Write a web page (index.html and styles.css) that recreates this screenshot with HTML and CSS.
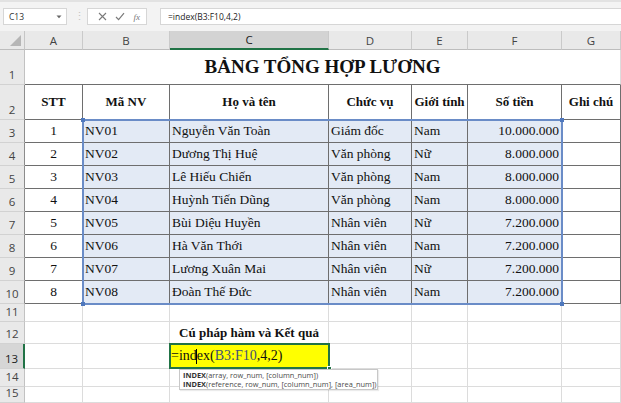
FILE: index.html
```html
<!DOCTYPE html>
<html lang="vi">
<head>
<meta charset="utf-8">
<title>Bảng tổng hợp lương</title>
<link rel="stylesheet" href="styles.css">
</head>
<body>
<div class="toolbar">
  <div class="namebox"><span>C13</span><svg class="dd" width="6" height="4" viewBox="0 0 6 4"><path d="M0.5 0.5 L3 3.2 L5.5 0.5" fill="#666"/></svg></div>
  <div class="sep">⋮</div>
  <div class="fxbox">
    <svg width="9" height="9" viewBox="0 0 9 9"><path d="M1 1 L8 8 M8 1 L1 8" stroke="#7a7a7a" stroke-width="1.1"/></svg>
    <svg width="10" height="9" viewBox="0 0 10 9"><path d="M1 5 L3.6 7.6 L9 1.2" stroke="#7a7a7a" stroke-width="1.2" fill="none"/></svg>
    <i class="fx">fx</i>
  </div>
  <div class="formula">=index(B3:F10,4,2)</div>
</div>

<div class="sheet">
  <div class="corner"><span class="tri"></span></div>
  <div class="ch">A</div><div class="ch">B</div><div class="ch selc">C</div><div class="ch">D</div><div class="ch">E</div><div class="ch">F</div><div class="ch">G</div>

  <div class="rh">1</div>
  <div class="c title">BẢNG TỔNG HỢP LƯƠNG</div>

  <div class="rh tr">2</div>
  <div class="c t hd">STT</div><div class="c t hd">Mã NV</div><div class="c t hd">Họ và tên</div><div class="c t hd">Chức vụ</div><div class="c t hd">Giới tính</div><div class="c t hd">Số tiền</div><div class="c t hd">Ghi chú</div>

  <div class="rh tr">3</div>
  <div class="c t ctr">1</div><div class="c t b">NV01</div><div class="c t b">Nguyễn Văn Toàn</div><div class="c t b">Giám đốc</div><div class="c t b">Nam</div><div class="c t b rt">10.000.000</div><div class="c t"></div>

  <div class="rh tr">4</div>
  <div class="c t ctr">2</div><div class="c t b">NV02</div><div class="c t b">Dương Thị Huệ</div><div class="c t b">Văn phòng</div><div class="c t b">Nữ</div><div class="c t b rt">8.000.000</div><div class="c t"></div>

  <div class="rh tr">5</div>
  <div class="c t ctr">3</div><div class="c t b">NV03</div><div class="c t b">Lê Hiếu Chiến</div><div class="c t b">Văn phòng</div><div class="c t b">Nam</div><div class="c t b rt">8.000.000</div><div class="c t"></div>

  <div class="rh tr">6</div>
  <div class="c t ctr">4</div><div class="c t b">NV04</div><div class="c t b">Huỳnh Tiến Dũng</div><div class="c t b">Văn phòng</div><div class="c t b">Nam</div><div class="c t b rt">8.000.000</div><div class="c t"></div>

  <div class="rh tr">7</div>
  <div class="c t ctr">5</div><div class="c t b">NV05</div><div class="c t b">Bùi Diệu Huyền</div><div class="c t b">Nhân viên</div><div class="c t b">Nữ</div><div class="c t b rt">7.200.000</div><div class="c t"></div>

  <div class="rh tr">8</div>
  <div class="c t ctr">6</div><div class="c t b">NV06</div><div class="c t b">Hà Văn Thới</div><div class="c t b">Nhân viên</div><div class="c t b">Nam</div><div class="c t b rt">7.200.000</div><div class="c t"></div>

  <div class="rh tr">9</div>
  <div class="c t ctr">7</div><div class="c t b">NV07</div><div class="c t b">Lương Xuân Mai</div><div class="c t b">Nhân viên</div><div class="c t b">Nữ</div><div class="c t b rt">7.200.000</div><div class="c t"></div>

  <div class="rh tr">10</div>
  <div class="c t ctr">8</div><div class="c t b">NV08</div><div class="c t b">Đoàn Thế Đức</div><div class="c t b">Nhân viên</div><div class="c t b">Nam</div><div class="c t b rt">7.200.000</div><div class="c t"></div>

  <div class="rh">11</div>
  <div class="c"></div><div class="c"></div><div class="c"></div><div class="c"></div><div class="c"></div><div class="c"></div><div class="c"></div>

  <div class="rh">12</div>
  <div class="c"></div><div class="c"></div><div class="c hd">Cú pháp hàm và Kết quả</div><div class="c"></div><div class="c"></div><div class="c"></div><div class="c"></div>

  <div class="rh selr">13</div>
  <div class="c"></div><div class="c"></div><div class="c yel">=ind<span class="caret"></span>ex(<span class="ref">B3:F10</span>,4,2)</div><div class="c"></div><div class="c"></div><div class="c"></div><div class="c"></div>

  <div class="rh">14</div>
  <div class="c"></div><div class="c"></div><div class="c"></div><div class="c"></div><div class="c"></div><div class="c"></div><div class="c"></div>

  <div class="rh">15</div>
  <div class="c"></div><div class="c"></div><div class="c"></div><div class="c"></div><div class="c"></div><div class="c"></div><div class="c"></div>

  <div class="range">
    <span class="hdl h-tl"></span><span class="hdl h-tr"></span><span class="hdl h-bl"></span><span class="hdl h-br"></span>
  </div>
  <div class="active"><span class="fill"></span></div>
  <div class="tip">
    <div><b>INDEX</b>(array, row_num, [column_num])</div>
    <div><b>INDEX</b>(reference, row_num, [column_num], [area_num])</div>
  </div>
</div>
</body>
</html>
```
FILE: styles.css
```css
html, body {
  margin: 0;
  padding: 0;
}
body {
  width: 621px;
  height: 403px;
  overflow: hidden;
  background: #ffffff;
  font-family: "Open Sans", "Noto Sans", sans-serif;
}

/* formula bar */
.toolbar {
  height: 31px;
  box-sizing: border-box;
  background: #f3f3f3;
  border-top: 2px solid #e2e2e2;
  padding-top: 6px;
  display: flex;
  align-items: flex-start;
}
.namebox {
  margin-left: 3px;
  width: 64px;
  height: 17px;
  box-sizing: border-box;
  background: #fff;
  border: 1px solid #d6d6d6;
  display: flex;
  align-items: center;
  justify-content: space-between;
  padding: 0 4px 0 5px;
  font-size: 8.5px;
  color: #333;
}
.sep {
  margin-left: 7px;
  width: 6px;
  height: 17px;
  font-size: 11px;
  line-height: 16px;
  color: #c4c4c4;
  text-align: center;
}
.fxbox {
  margin-left: 7px;
  width: 60px;
  height: 17px;
  box-sizing: border-box;
  background: #fff;
  border: 1px solid #d6d6d6;
  display: flex;
  align-items: center;
  justify-content: space-around;
  padding: 0 2px 0 6px;
}
.fx {
  font-family: "Liberation Serif", serif;
  font-size: 9px;
  color: #777;
}
.formula {
  margin-left: 13px;
  flex: 1;
  height: 17px;
  box-sizing: border-box;
  background: #fff;
  border: 1px solid #d6d6d6;
  border-right: none;
  padding-left: 7px;
  font-size: 8.5px;
  line-height: 15px;
  color: #222;
}

/* sheet grid */
.sheet {
  position: relative;
  display: grid;
  grid-template-columns: 25px 58px 87px 159px 83px 56px 94px 59px;
  grid-template-rows: 19px 35px 35px repeat(8, 23px) 18px 22px 25px 18px 16px;
}
.corner {
  background: #e9e9e9;
  border-right: 1px solid #c6c6c6;
  border-bottom: 1px solid #bdbdbd;
  position: relative;
}
.tri {
  position: absolute;
  right: 3px;
  bottom: 3px;
  width: 0;
  height: 0;
  border-left: 11px solid transparent;
  border-bottom: 11px solid #b6b6b6;
}
.ch {
  background: #e9e9e9;
  border-right: 1px solid #cacaca;
  border-bottom: 1px solid #bdbdbd;
  display: flex;
  align-items: center;
  justify-content: center;
  font-size: 11.5px;
  color: #444;
}
.ch.selc {
  background: #d3d3d3;
  border-bottom: 2px solid #217346;
  color: #222;
}
.rh {
  background: #e9e9e9;
  border-right: 1px solid #c2c2c2;
  border-bottom: 1px solid #d2d2d2;
  display: flex;
  align-items: flex-end;
  justify-content: center;
  padding-bottom: 2px;
  box-sizing: border-box;
  font-size: 11.5px;
  line-height: 14px;
  color: #444;
}
.rh.tr {
  border-right-color: #8c8c8c;
}
.rh.selr {
  background: #d6d6d6;
  border-right: 2px solid #217346;
  color: #222;
}

.c {
  box-sizing: border-box;
  border-right: 1px solid #dcdcdc;
  border-bottom: 1px solid #dcdcdc;
  display: flex;
  align-items: center;
  padding: 0 2px;
  white-space: nowrap;
  font-family: "Liberation Serif", "Times New Roman", serif;
  font-size: 13.5px;
  color: #111;
}
.c.t {
  border-right-color: #6e6e6e;
  border-bottom-color: #6e6e6e;
}
.c.b {
  background: #e3eaf5;
}
.c.ctr {
  justify-content: center;
}
.c.rt {
  justify-content: flex-end;
}
.c.hd {
  justify-content: center;
  font-weight: bold;
  font-size: 13px;
}
.c.title {
  grid-column: span 7;
  justify-content: center;
  font-weight: bold;
  font-size: 19px;
  border-bottom-color: #6e6e6e;
}
.c.yel {
  background: #ffff00;
  font-size: 14px;
  padding-left: 1px;
}
.ref {
  color: #3f5078;
}
.caret {
  display: inline-block;
  width: 1px;
  height: 15px;
  background: #000;
  margin: 0 -0.5px;
}

/* overlays */
.range {
  position: absolute;
  left: 82px;
  top: 88px;
  width: 481px;
  height: 186px;
  box-sizing: border-box;
  border: 2px solid #6a8cc7;
  pointer-events: none;
}
.hdl {
  position: absolute;
  width: 4px;
  height: 4px;
  background: #4f78bd;
}
.h-tl { left: -3px; top: -3px; }
.h-tr { right: -3px; top: -3px; }
.h-bl { left: -3px; bottom: -3px; }
.h-br { right: -3px; bottom: -3px; }

.active {
  position: absolute;
  left: 169px;
  top: 312px;
  width: 161px;
  height: 26px;
  box-sizing: border-box;
  border: 2px solid #217346;
}
.fill {
  position: absolute;
  right: -4px;
  bottom: -4px;
  width: 5px;
  height: 5px;
  background: #217346;
  border: 1px solid #fff;
  box-sizing: border-box;
}
.tip {
  position: absolute;
  left: 179px;
  top: 338px;
  width: 199px;
  height: 21px;
  box-sizing: border-box;
  background: #fff;
  border: 1px solid #c8c8c8;
  box-shadow: 1px 1px 1px rgba(0, 0, 0, 0.08);
  padding: 1px 0 0 3px;
  font-size: 7.4px;
  line-height: 9px;
  color: #4a4a4a;
  white-space: nowrap;
}
.tip b {
  color: #333;
}
```
